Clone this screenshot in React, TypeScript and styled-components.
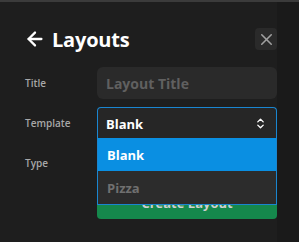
import styled, { createGlobalStyle } from "styled-components";
import { ArrowLeft, ChevronsUpDown, X } from "lucide-react";

const GlobalStyle = createGlobalStyle`
  html, body {
    margin: 0;
    padding: 0;
    background: #191919;
    font-family: "Open Sans", "Noto Sans", sans-serif;
  }
`;

const Window = styled.div`
  width: 299px;
  height: 242px;
  box-sizing: border-box;
  border-top: 2px solid #3b3b3b;
  background: linear-gradient(to right, #1e1e1e 277px, #1a1a1a 277px);
  overflow: hidden;
`;

const Panel = styled.div`
  padding: 26px 22px 0 24px;
  display: flex;
  flex-direction: column;
  gap: 17px;
`;

const Header = styled.div`
  display: flex;
  align-items: center;
  justify-content: space-between;
  height: 22px;
`;

const Heading = styled.h1`
  margin: 0;
  display: flex;
  align-items: center;
  gap: 6px;
  font-size: 20px;
  font-weight: 700;
  color: #ffffff;
  letter-spacing: -0.2px;
`;

const CloseButton = styled.button`
  width: 22px;
  height: 22px;
  padding: 0;
  border: none;
  border-radius: 4px;
  background: #2a2a2a;
  color: #a0a0a0;
  display: flex;
  align-items: center;
  justify-content: center;
`;

const Form = styled.div`
  display: grid;
  grid-template-columns: 73px 180px;
  grid-auto-rows: 32px;
  row-gap: 8px;
  align-items: center;
`;

const Label = styled.label`
  font-size: 10px;
  font-weight: 600;
  color: #a8a8a8;
  padding-left: 1px;
`;

const Input = styled.input`
  height: 32px;
  box-sizing: border-box;
  border: none;
  border-radius: 6px;
  background: #2a2a2a;
  padding: 0 9px;
  font-family: inherit;
  font-size: 14px;
  font-weight: 700;
  color: #fff;
  outline: none;
  &::placeholder {
    color: #606060;
  }
`;

const SelectWrap = styled.div`
  position: relative;
  height: 32px;
`;

const Trigger = styled.div`
  height: 32px;
  box-sizing: border-box;
  border: 1px solid #1a86d0;
  border-bottom: none;
  border-radius: 4px 4px 0 0;
  background: #262626;
  padding: 0 9px 0 8px;
  display: flex;
  align-items: center;
  justify-content: space-between;
  font-size: 13px;
  font-weight: 700;
  color: #fff;
`;

const Options = styled.ul`
  position: absolute;
  top: 31px;
  left: 0;
  right: 0;
  margin: 0;
  padding: 0;
  list-style: none;
  border: 1px solid #1a86d0;
  border-top: none;
  z-index: 2;
`;

const Option = styled.li<{ $active?: boolean }>`
  height: 33px;
  padding: 0 9px;
  display: flex;
  align-items: center;
  font-size: 13px;
  font-weight: 700;
  background: ${(p) => (p.$active ? "#0a8fe2" : "#2c2c2c")};
  color: ${(p) => (p.$active ? "#ffffff" : "#707070")};
`;

const Spacer = styled.div``;

const SubmitButton = styled.button`
  height: 32px;
  border: none;
  border-radius: 4px;
  background: #15884c;
  color: #d0d0d0;
  font-family: inherit;
  font-size: 13px;
  font-weight: 700;
`;

export default function App() {
  return (
    <>
      <GlobalStyle />
      <Window>
        <Panel>
          <Header>
            <Heading>
              <ArrowLeft size={22} strokeWidth={2.5} />
              Layouts
            </Heading>
            <CloseButton>
              <X size={19} strokeWidth={2} />
            </CloseButton>
          </Header>
          <Form>
            <Label>Title</Label>
            <Input placeholder="Layout Title" />
            <Label>Template</Label>
            <SelectWrap>
              <Trigger>
                Blank
                <ChevronsUpDown size={13} strokeWidth={2.5} />
              </Trigger>
              <Options>
                <Option $active>Blank</Option>
                <Option>Pizza</Option>
              </Options>
            </SelectWrap>
            <Label>Type</Label>
            <Input />
            <Spacer />
            <SubmitButton>Create Layout</SubmitButton>
          </Form>
        </Panel>
      </Window>
    </>
  );
}
